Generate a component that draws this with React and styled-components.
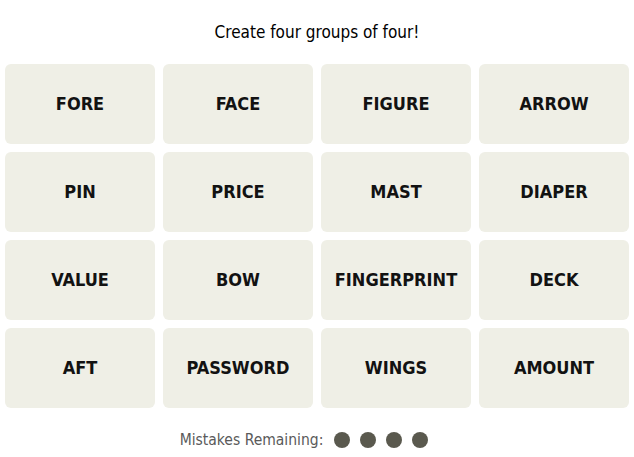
import React from "react";
import styled, { createGlobalStyle } from "styled-components";

const Global = createGlobalStyle`
  html, body { margin: 0; padding: 0; background: #fff; }
  body { font-family: "Liberation Sans Narrow", "DejaVu Sans Condensed", "Liberation Sans", sans-serif; }
`;

const Page = styled.div`
  width: 634px;
  display: flex;
  flex-direction: column;
  align-items: center;
`;

const Title = styled.h2`
  margin: 20px 0 0;
  height: 24px;
  line-height: 24px;
  font-size: 17px;
  font-weight: 400;
  color: #000;
`;

const Grid = styled.div`
  margin-top: 20px;
  display: grid;
  grid-template-columns: repeat(4, 150px);
  grid-auto-rows: 80px;
  gap: 8px;
`;

const Tile = styled.button`
  border: none;
  border-radius: 6px;
  background: #efefe6;
  color: #121212;
  font-family: inherit;
  font-weight: 700;
  font-size: 18px;
  text-transform: uppercase;
  display: flex;
  align-items: center;
  justify-content: center;
  padding: 0 0 2px;
`;

const Mistakes = styled.div`
  margin-top: 23px;
  padding-right: 26px;
  display: flex;
  align-items: center;
  gap: 11px;
  font-size: 15.5px;
  color: #5a5a5a;
`;

const Dots = styled.div`
  display: flex;
  gap: 10px;
`;

const Dot = styled.span`
  width: 16px;
  height: 16px;
  border-radius: 50%;
  background: #5a594e;
`;

const words = [
  "FORE", "FACE", "FIGURE", "ARROW",
  "PIN", "PRICE", "MAST", "DIAPER",
  "VALUE", "BOW", "FINGERPRINT", "DECK",
  "AFT", "PASSWORD", "WINGS", "AMOUNT",
];

export default function App() {
  return (
    <Page>
      <Global />
      <Title>Create four groups of four!</Title>
      <Grid>
        {words.map((w) => (
          <Tile key={w}>{w}</Tile>
        ))}
      </Grid>
      <Mistakes>
        Mistakes Remaining:
        <Dots>
          {[0, 1, 2, 3].map((i) => (
            <Dot key={i} />
          ))}
        </Dots>
      </Mistakes>
    </Page>
  );
}
